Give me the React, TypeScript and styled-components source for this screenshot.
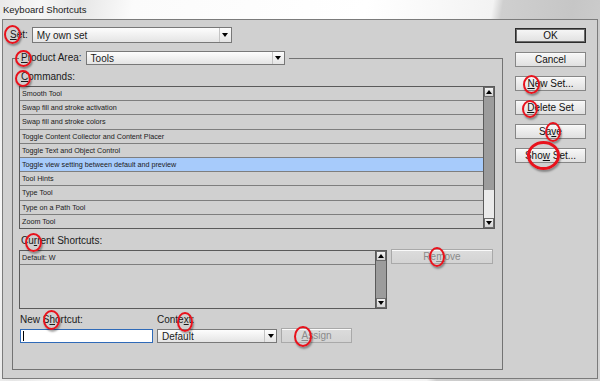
import React from "react";
import styled, { createGlobalStyle } from "styled-components";

const GlobalStyle = createGlobalStyle`
  html, body {
    margin: 0;
    padding: 0;
    background: #ffffff;
  }
`;

const Page = styled.div`
  position: relative;
  width: 600px;
  height: 381px;
  overflow: hidden;
  display: flex;
  flex-direction: column;
  font-family: "Liberation Sans", Arial, sans-serif;
  color: #1a1a1a;
  background: linear-gradient(
    100deg,
    #e9e9e9 0%,
    #f7f7f7 6%,
    #e6e6e6 12%,
    #fbfbfb 20%,
    #ffffff 55%,
    #f3f3f3 74%,
    #cfcfcf 75.5%,
    #c6c6c6 86%,
    #d6d6d6 100%
  );
`;

const TitleBar = styled.div`
  height: 19px;
  flex: none;
  padding-left: 3px;
  display: flex;
  align-items: center;
  font-size: 9.5px;
  color: #202020;
`;

const Dialog = styled.div`
  margin: 0 2px;
  height: 360px;
  flex: none;
  box-sizing: border-box;
  border: 1px solid #7b7b7b;
  background: #d0d0d0;
  display: flex;
  padding: 7px 0 0 7px;
`;

const LeftColumn = styled.div`
  width: 493px;
  display: flex;
  flex-direction: column;
`;

const ButtonColumn = styled.div`
  margin-left: 12px;
  padding-top: 1px;
  width: 71px;
  display: flex;
  flex-direction: column;
  gap: 9px;
`;

const SetRow = styled.div`
  display: flex;
  align-items: center;
  height: 16px;
  gap: 4px;
`;

const Label = styled.span`
  font-size: 10px;
  line-height: 12px;
  white-space: nowrap;
`;

const SectionLabel = styled(Label)`
  display: block;
  margin: ${(p: { $top: number; $bottom: number }) => `${p.$top}px 0 ${p.$bottom}px 2px`};
`;

const Key = styled.span`
  text-decoration: underline;
  text-underline-offset: 1px;
`;

const Select = styled.div<{ $width: number; $height: number }>`
  width: ${(p) => p.$width}px;
  height: ${(p) => p.$height}px;
  box-sizing: border-box;
  display: flex;
  border: 1px solid #787878;
  background: linear-gradient(#fdfdfd, #e4e4e4);
`;

const SelectText = styled.span`
  flex: 1;
  padding-left: 4px;
  font-size: 10px;
  display: flex;
  align-items: center;
`;

const SelectArrow = styled.span`
  width: 11px;
  border-left: 1px solid #c4c4c4;
  display: flex;
  align-items: center;
  justify-content: center;
`;

const GroupBox = styled.fieldset`
  margin: 8px 0 0 2px;
  padding: 0 7px 26px 6px;
  width: 491px;
  box-sizing: border-box;
  min-width: 0;
  border: 1px solid #737373;
`;

const Legend = styled.legend`
  padding: 0 4px 0 2px;
  display: flex;
  align-items: center;
  gap: 4px;
`;

const ListBox = styled.div<{ $height: number; $width?: number }>`
  display: flex;
  width: ${(p) => (p.$width ? `${p.$width}px` : "auto")};
  height: ${(p) => p.$height}px;
  box-sizing: border-box;
  border: 1px solid #5a5a5a;
  background: #d0d0d0;
`;

const ListRows = styled.div`
  flex: 1;
  overflow: hidden;
`;

const ListRow = styled.div<{ $selected?: boolean }>`
  height: 14.2px;
  box-sizing: border-box;
  padding-left: 2px;
  border-bottom: 1px solid #7e7e7e;
  font-size: 7.2px;
  line-height: 13px;
  white-space: nowrap;
  background: ${(p) => (p.$selected ? "#a7cbfb" : "transparent")};
`;

const ScrollBar = styled.div`
  width: 10px;
  border-left: 1px solid #5a5a5a;
  display: flex;
  flex-direction: column;
  background: #9c9c9c;
`;

const ScrollArrow = styled.div`
  height: 10px;
  flex: none;
  box-sizing: border-box;
  border: 1px solid #6c6c6c;
  background: linear-gradient(#f4f4f4, #d2d2d2);
  display: flex;
  align-items: center;
  justify-content: center;
`;

const ScrollThumb = styled.div`
  flex: 1;
  background: #9c9c9c;
`;

const ScrollTrack = styled.div<{ $height: number }>`
  height: ${(p) => p.$height}px;
  background: #ebebeb;
`;

const ShortcutRow = styled.div`
  display: flex;
  align-items: flex-start;
  gap: 4px;
`;

const BottomRow = styled.div`
  display: flex;
  align-items: flex-end;
  gap: 4px;
  margin-top: 5px;
`;

const FieldGroup = styled.div<{ $indent?: number }>`
  display: flex;
  flex-direction: column;
  gap: 3px;
  margin-left: ${(p) => p.$indent ?? 0}px;
`;

const TextInput = styled.div`
  width: 133px;
  height: 14px;
  box-sizing: border-box;
  border: 1px solid #2f6ab8;
  background: #ffffff;
  display: flex;
  align-items: center;
  padding-left: 2px;
`;

const Caret = styled.span`
  width: 1px;
  height: 10px;
  background: #000000;
`;

const Button = styled.div<{ $width?: number; $primary?: boolean; $disabled?: boolean; $lift?: number }>`
  width: ${(p) => p.$width ?? 71}px;
  height: 15px;
  margin-top: ${(p) => -(p.$lift ?? 0)}px;
  box-sizing: border-box;
  flex: none;
  text-align: center;
  white-space: nowrap;
  font-size: 10px;
  line-height: 13px;
  border: 1px solid ${(p) => (p.$primary ? "#2c2c2c" : p.$disabled ? "#a9a9a9" : "#868686")};
  box-shadow: ${(p) => (p.$primary ? "inset 0 0 0 1px #6a6a6a" : "inset 0 1px 0 #fafafa")};
  background: ${(p) =>
    p.$disabled ? "linear-gradient(#dcdcdc, #d3d3d3)" : "linear-gradient(#f7f7f7, #e0e0e0)"};
  color: ${(p) => (p.$disabled ? "#8a8a8a" : "#111111")};
`;

const Ring = styled.span<{ $x: number; $y: number; $w: number; $h: number; $t?: number }>`
  position: absolute;
  left: ${(p) => p.$x}px;
  top: ${(p) => p.$y}px;
  width: ${(p) => p.$w}px;
  height: ${(p) => p.$h}px;
  box-sizing: border-box;
  border: ${(p) => p.$t ?? 2}px solid #e8121c;
  border-radius: 50%;
  box-shadow: 1px 2px 2px rgba(0, 0, 0, 0.35);
  pointer-events: none;
`;

const DownArrow = () => (
  <svg width="6" height="4" viewBox="0 0 6 4">
    <polygon points="0,0 6,0 3,4" fill="#000" />
  </svg>
);

const UpArrow = () => (
  <svg width="6" height="4" viewBox="0 0 6 4">
    <polygon points="0,4 6,4 3,0" fill="#000" />
  </svg>
);

function Dropdown({ width, height, value }: { width: number; height: number; value: string }) {
  return (
    <Select $width={width} $height={height}>
      <SelectText>{value}</SelectText>
      <SelectArrow>
        <DownArrow />
      </SelectArrow>
    </Select>
  );
}

const commands = [
  "Smooth Tool",
  "Swap fill and stroke activation",
  "Swap fill and stroke colors",
  "Toggle Content Collector and Content Placer",
  "Toggle Text and Object Control",
  "Toggle view setting between default and preview",
  "Tool Hints",
  "Type Tool",
  "Type on a Path Tool",
  "Zoom Tool",
];

const rings = [
  { x: 4, y: 25, w: 17, h: 19 },
  { x: 15, y: 50, w: 17, h: 17 },
  { x: 15, y: 70, w: 16, h: 17 },
  { x: 523, y: 75, w: 17, h: 19 },
  { x: 522, y: 100, w: 16, h: 18 },
  { x: 545, y: 122, w: 16, h: 20 },
  { x: 527, y: 141, w: 33, h: 29, t: 3 },
  { x: 25, y: 233, w: 17, h: 19 },
  { x: 429, y: 247, w: 16, h: 20 },
  { x: 43, y: 310, w: 17, h: 20 },
  { x: 177, y: 312, w: 16, h: 20 },
  { x: 294, y: 326, w: 18, h: 21 },
];

export default function App() {
  return (
    <Page>
      <GlobalStyle />
      <TitleBar>Keyboard Shortcuts</TitleBar>
      <Dialog>
        <LeftColumn>
          <SetRow>
            <Label>
              <Key>S</Key>et:
            </Label>
            <Dropdown width={200} height={16} value="My own set" />
          </SetRow>

          <GroupBox>
            <Legend>
              <Label>
                <Key>P</Key>roduct Area:
              </Label>
              <Dropdown width={199} height={14} value="Tools" />
            </Legend>

            <SectionLabel $top={6} $bottom={3}>
              <Key>C</Key>ommands:
            </SectionLabel>
            <ListBox $height={143}>
              <ListRows>
                {commands.map((c) => (
                  <ListRow key={c} $selected={c.startsWith("Toggle view")}>
                    {c}
                  </ListRow>
                ))}
              </ListRows>
              <ScrollBar>
                <ScrollArrow>
                  <UpArrow />
                </ScrollArrow>
                <ScrollThumb />
                <ScrollTrack $height={28} />
                <ScrollArrow>
                  <DownArrow />
                </ScrollArrow>
              </ScrollBar>
            </ListBox>

            <SectionLabel $top={6} $bottom={3}>
              Cu<Key>r</Key>rent Shortcuts:
            </SectionLabel>
            <ShortcutRow>
              <ListBox $height={59} $width={368}>
                <ListRows>
                  <ListRow>Default: W</ListRow>
                </ListRows>
                <ScrollBar>
                  <ScrollArrow>
                    <UpArrow />
                  </ScrollArrow>
                  <ScrollThumb />
                  <ScrollArrow>
                    <DownArrow />
                  </ScrollArrow>
                </ScrollBar>
              </ListBox>
              <Button $width={102} $disabled $lift={1}>
                Re<Key>m</Key>ove
              </Button>
            </ShortcutRow>

            <BottomRow>
              <FieldGroup $indent={1}>
                <Label>
                  New S<Key>h</Key>ortcut:
                </Label>
                <TextInput>
                  <Caret />
                </TextInput>
              </FieldGroup>
              <FieldGroup>
                <Label>
                  Conte<Key>x</Key>t:
                </Label>
                <Dropdown width={120} height={14} value="Default" />
              </FieldGroup>
              <Button $width={71} $disabled>
                <Key>A</Key>ssign
              </Button>
            </BottomRow>
          </GroupBox>
        </LeftColumn>

        <ButtonColumn>
          <Button $primary>OK</Button>
          <Button>Cancel</Button>
          <Button>
            <Key>N</Key>ew Set...
          </Button>
          <Button>
            <Key>D</Key>elete Set
          </Button>
          <Button>
            Sa<Key>v</Key>e
          </Button>
          <Button>
            Sho<Key>w</Key> Set...
          </Button>
        </ButtonColumn>
      </Dialog>

      {rings.map((r, i) => (
        <Ring key={i} $x={r.x} $y={r.y} $w={r.w} $h={r.h} $t={r.t} />
      ))}
    </Page>
  );
}
